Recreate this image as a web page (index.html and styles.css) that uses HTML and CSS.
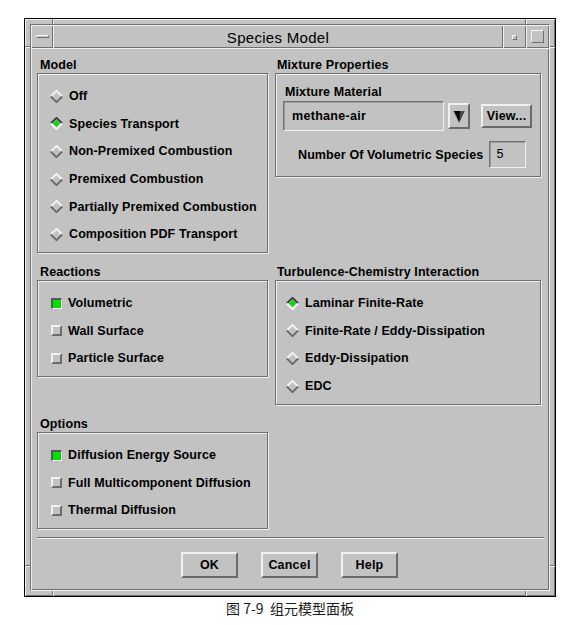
FILE: index.html
```html
<!DOCTYPE html>
<html lang="zh-CN">

<head>
    <meta charset="UTF-8">
    <meta name="viewport" content="width=device-width, initial-scale=1.0">
    <title>Species Model</title>
    <link rel="stylesheet" href="styles.css">
</head>

<body>
    <!-- shared glyphs for the radio buttons -->
    <svg class="defs" width="0" height="0">
        <symbol id="radio-off" viewBox="0 0 13 13">
            <polygon points="6.5,0.5 12.5,6.5 6.5,12.5 0.5,6.5" fill="#c2c2c2" />
            <polyline points="0.8,6.5 6.5,0.8 12.2,6.5" fill="none" stroke="#f4f4f4" stroke-width="1.8" />
            <polyline points="0.8,6.5 6.5,12.2 12.2,6.5" fill="none" stroke="#6a6a6a" stroke-width="1.8" />
        </symbol>
        <symbol id="radio-on" viewBox="0 0 13 13">
            <polygon points="6.5,0.5 12.5,6.5 6.5,12.5 0.5,6.5" fill="#c2c2c2" />
            <polygon points="6.5,3 10,6.5 6.5,10 3,6.5" fill="#00e000" />
            <polyline points="0.8,6.5 6.5,0.8 12.2,6.5" fill="none" stroke="#3c3c3c" stroke-width="1.8" />
            <polyline points="0.8,6.5 6.5,12.2 12.2,6.5" fill="none" stroke="#f4f4f4" stroke-width="1.8" />
        </symbol>
    </svg>

    <div class="window">
        <span class="notch v" id="notch-tl"></span>
        <span class="notch v" id="notch-tr"></span>
        <span class="notch v" id="notch-bl"></span>
        <span class="notch v" id="notch-br"></span>
        <span class="notch h" id="notch-lt"></span>
        <span class="notch h" id="notch-rt"></span>
        <span class="notch h" id="notch-lb"></span>
        <span class="notch h" id="notch-rb"></span>

        <div class="frame">
            <div class="titlebar">
                <div class="tb-btn menu-btn"><span class="menu-glyph"></span></div>
                <div class="tb-title">Species Model</div>
                <div class="tb-btn min-btn"><span class="min-glyph"></span></div>
                <div class="tb-btn max-btn"><span class="max-glyph"></span></div>
            </div>

            <div class="client">
                <div class="panels">
                    <div class="group">
                        <div class="group-label">Model</div>
                        <div class="group-box model-box">
                            <div class="item"><svg class="radio"><use href="#radio-off" /></svg>Off</div>
                            <div class="item"><svg class="radio"><use href="#radio-on" /></svg>Species Transport</div>
                            <div class="item"><svg class="radio"><use href="#radio-off" /></svg>Non-Premixed Combustion</div>
                            <div class="item"><svg class="radio"><use href="#radio-off" /></svg>Premixed Combustion</div>
                            <div class="item"><svg class="radio"><use href="#radio-off" /></svg>Partially Premixed Combustion</div>
                            <div class="item"><svg class="radio"><use href="#radio-off" /></svg>Composition PDF Transport</div>
                        </div>
                    </div>

                    <div class="group">
                        <div class="group-label">Mixture Properties</div>
                        <div class="group-box mixture-box">
                            <div class="field-label">Mixture Material</div>
                            <div class="material-row">
                                <div class="text-field material-field">methane-air</div>
                                <div class="combo-btn">
                                    <svg width="12" height="13" viewBox="0 0 12 13">
                                        <polygon points="0.5,1 11.5,1 6,12.5" fill="#000" />
                                        <polygon points="7,1 11.5,1 6.5,12" fill="#4a4a4a" />
                                        <line x1="0.5" y1="1" x2="6" y2="12.5" stroke="#8a8a8a" stroke-width="0.8" />
                                    </svg>
                                </div>
                                <div class="push-btn view-btn">View...</div>
                            </div>
                            <div class="species-row">
                                <span>Number Of Volumetric Species</span>
                                <div class="text-field species-field">5</div>
                            </div>
                        </div>
                    </div>

                    <div class="group">
                        <div class="group-label">Reactions</div>
                        <div class="group-box reactions-box">
                            <div class="item"><span class="check on"></span>Volumetric</div>
                            <div class="item"><span class="check"></span>Wall Surface</div>
                            <div class="item"><span class="check"></span>Particle Surface</div>
                        </div>
                    </div>

                    <div class="group">
                        <div class="group-label">Turbulence-Chemistry Interaction</div>
                        <div class="group-box turbulence-box">
                            <div class="item"><svg class="radio"><use href="#radio-on" /></svg>Laminar Finite-Rate</div>
                            <div class="item"><svg class="radio"><use href="#radio-off" /></svg>Finite-Rate / Eddy-Dissipation</div>
                            <div class="item"><svg class="radio"><use href="#radio-off" /></svg>Eddy-Dissipation</div>
                            <div class="item"><svg class="radio"><use href="#radio-off" /></svg>EDC</div>
                        </div>
                    </div>

                    <div class="group">
                        <div class="group-label">Options</div>
                        <div class="group-box options-box">
                            <div class="item"><span class="check on"></span>Diffusion Energy Source</div>
                            <div class="item"><span class="check"></span>Full Multicomponent Diffusion</div>
                            <div class="item"><span class="check"></span>Thermal Diffusion</div>
                        </div>
                    </div>
                </div>

                <div class="separator"></div>

                <div class="button-row">
                    <div class="push-btn">OK</div>
                    <div class="push-btn">Cancel</div>
                    <div class="push-btn">Help</div>
                </div>
            </div>
        </div>
    </div>

    <div class="caption">图 7-9&nbsp; 组元模型面板</div>
</body>

</html>
```

FILE: styles.css
```css
body {
    margin: 0;
    background-color: #fff;
    font-family: "Liberation Sans", Arial, sans-serif;
    color: #000;
}

.defs {
    position: absolute;
    width: 0;
    height: 0;
    overflow: hidden;
}

/* window frame */
.window {
    position: relative;
    box-sizing: border-box;
    width: 532px;
    height: 579px;
    margin: 18px 0 0 24px;
    padding: 5px;
    border: 1px solid #000;
    background-color: #c2c2c2;
    box-shadow: inset 1px 1px 0 #f0f0f0, inset -1px -1px 0 #707070;
}

.notch {
    position: absolute;
}

.notch.v {
    width: 2px;
    height: 5px;
    background: linear-gradient(to right, #707070 50%, #f0f0f0 50%);
}

.notch.h {
    width: 5px;
    height: 2px;
    background: linear-gradient(to bottom, #707070 50%, #f0f0f0 50%);
}

#notch-tl { left: 27px; top: 0; }
#notch-tr { left: 500px; top: 0; }
#notch-bl { left: 27px; bottom: 0; }
#notch-br { left: 500px; bottom: 0; }
#notch-lt { left: 0; top: 27px; }
#notch-rt { right: 0; top: 27px; }
#notch-lb { left: 0; top: 546px; }
#notch-rb { right: 0; top: 546px; }

.frame {
    box-sizing: border-box;
    height: 100%;
    display: flex;
    flex-direction: column;
    border: 1px solid;
    border-color: #707070 #f0f0f0 #f0f0f0 #707070;
}

/* title bar */
.titlebar {
    display: flex;
    height: 23px;
    flex-shrink: 0;
}

.tb-btn,
.tb-title {
    box-shadow: inset 1px 1px 0 #f0f0f0, inset -1px -1px 0 #707070;
    display: flex;
    align-items: center;
    justify-content: center;
}

.menu-btn {
    width: 22px;
}

.min-btn,
.max-btn {
    width: 23px;
}

.tb-title {
    flex: 1;
    font-size: 15px;
    letter-spacing: 0.3px;
    padding-top: 1px;
    box-sizing: border-box;
}

.menu-glyph {
    width: 13px;
    height: 3px;
    box-sizing: border-box;
    border: 1px solid;
    border-color: #f4f4f4 #707070 #707070 #f4f4f4;
}

.min-glyph {
    width: 5px;
    height: 5px;
    box-sizing: border-box;
    border: 1px solid;
    border-color: #f4f4f4 #707070 #707070 #f4f4f4;
    margin-top: 1px;
}

.max-glyph {
    width: 13px;
    height: 13px;
    box-sizing: border-box;
    border: 1px solid;
    border-color: #f4f4f4 #707070 #707070 #f4f4f4;
}

/* client area */
.client {
    flex: 1;
    padding: 9px 7px 0 6px;
    box-shadow: inset 1px 1px 0 #f0f0f0, inset -1px -1px 0 #707070;
}

.panels {
    display: grid;
    grid-template-columns: 231px 266px;
    column-gap: 7px;
    row-gap: 11px;
    align-items: start;
}

.group-label {
    height: 16px;
    line-height: 16px;
    font-size: 12.5px;
    font-weight: bold;
    letter-spacing: 0.1px;
    padding-left: 3px;
}

.group:nth-child(even) .group-label {
    padding-left: 2px;
}

.group-box {
    box-sizing: border-box;
    border: 1px solid #6e6e6e;
    box-shadow: inset 1px 1px 0 #f0f0f0, 1px 1px 0 #f0f0f0;
    padding-top: 8.5px;
}

.model-box {
    height: 180px;
    padding-left: 12px;
}

.mixture-box {
    height: 104px;
    padding: 0 0 0 7px;
}

.reactions-box,
.options-box {
    height: 97px;
    padding-left: 13px;
}

.turbulence-box {
    height: 125px;
    padding-left: 10px;
}

.item {
    display: flex;
    align-items: center;
    height: 27.6px;
    font-size: 12.5px;
    font-weight: bold;
    letter-spacing: 0.1px;
}

.radio {
    width: 13px;
    height: 13px;
    margin-right: 6px;
    flex-shrink: 0;
}

.check {
    width: 11px;
    height: 11px;
    box-sizing: border-box;
    margin-right: 6px;
    border: 2px solid;
    border-color: #f0f0f0 #6a6a6a #6a6a6a #f0f0f0;
    background-color: #c2c2c2;
    flex-shrink: 0;
}

.check.on {
    border-width: 2px 1px 1px 2px;
    border-color: #5a5a5a #f4f4f4 #f4f4f4 #5a5a5a;
    background-color: #00e000;
}

/* mixture properties */
.field-label {
    margin-top: 10px;
    padding-left: 2px;
    height: 16px;
    line-height: 16px;
    font-size: 12.5px;
    font-weight: bold;
    letter-spacing: 0.1px;
}

.material-row {
    display: flex;
    align-items: center;
    height: 30px;
    margin-top: 1px;
}

.text-field {
    box-sizing: border-box;
    border: 1px solid;
    border-color: #707070 #f0f0f0 #f0f0f0 #707070;
    box-shadow: inset 1px 1px 0 #9a9a9a;
    display: flex;
    align-items: center;
    font-size: 12.5px;
}

.material-field {
    width: 161px;
    height: 30px;
    padding-left: 8px;
    font-weight: bold;
    letter-spacing: 0.3px;
}

.combo-btn {
    box-sizing: border-box;
    width: 22px;
    height: 26px;
    margin-left: 4px;
    border: 2px solid;
    border-color: #f0f0f0 #6a6a6a #6a6a6a #f0f0f0;
    display: flex;
    align-items: center;
    justify-content: center;
}

.push-btn {
    box-sizing: border-box;
    width: 57px;
    height: 26px;
    border: 2px solid;
    border-color: #f0f0f0 #6a6a6a #6a6a6a #f0f0f0;
    display: flex;
    align-items: center;
    justify-content: center;
    font-size: 12.5px;
    font-weight: bold;
    letter-spacing: 0.2px;
}

.view-btn {
    width: 51px;
    height: 24px;
    margin-left: 11px;
}

.species-row {
    display: flex;
    align-items: center;
    gap: 6px;
    height: 27px;
    margin-top: 10px;
    padding-left: 15px;
    font-size: 12.5px;
    font-weight: bold;
    letter-spacing: 0.1px;
}

.species-field {
    width: 37px;
    height: 27px;
    padding-left: 6px;
    font-weight: normal;
    font-family: "Liberation Mono", monospace;
}

/* bottom of dialog */
.separator {
    height: 0;
    margin: 8px -2px 0 0;
    border-top: 1px solid #6e6e6e;
    border-bottom: 1px solid #f0f0f0;
}

.button-row {
    display: flex;
    justify-content: center;
    gap: 23px;
    margin-top: 13px;
}

.caption {
    width: 532px;
    margin: 1px 0 0 24px;
    text-align: center;
    line-height: 20px;
    font-family: "Noto Sans CJK SC", sans-serif;
    font-size: 14px;
    color: #1a1a1a;
}
```
